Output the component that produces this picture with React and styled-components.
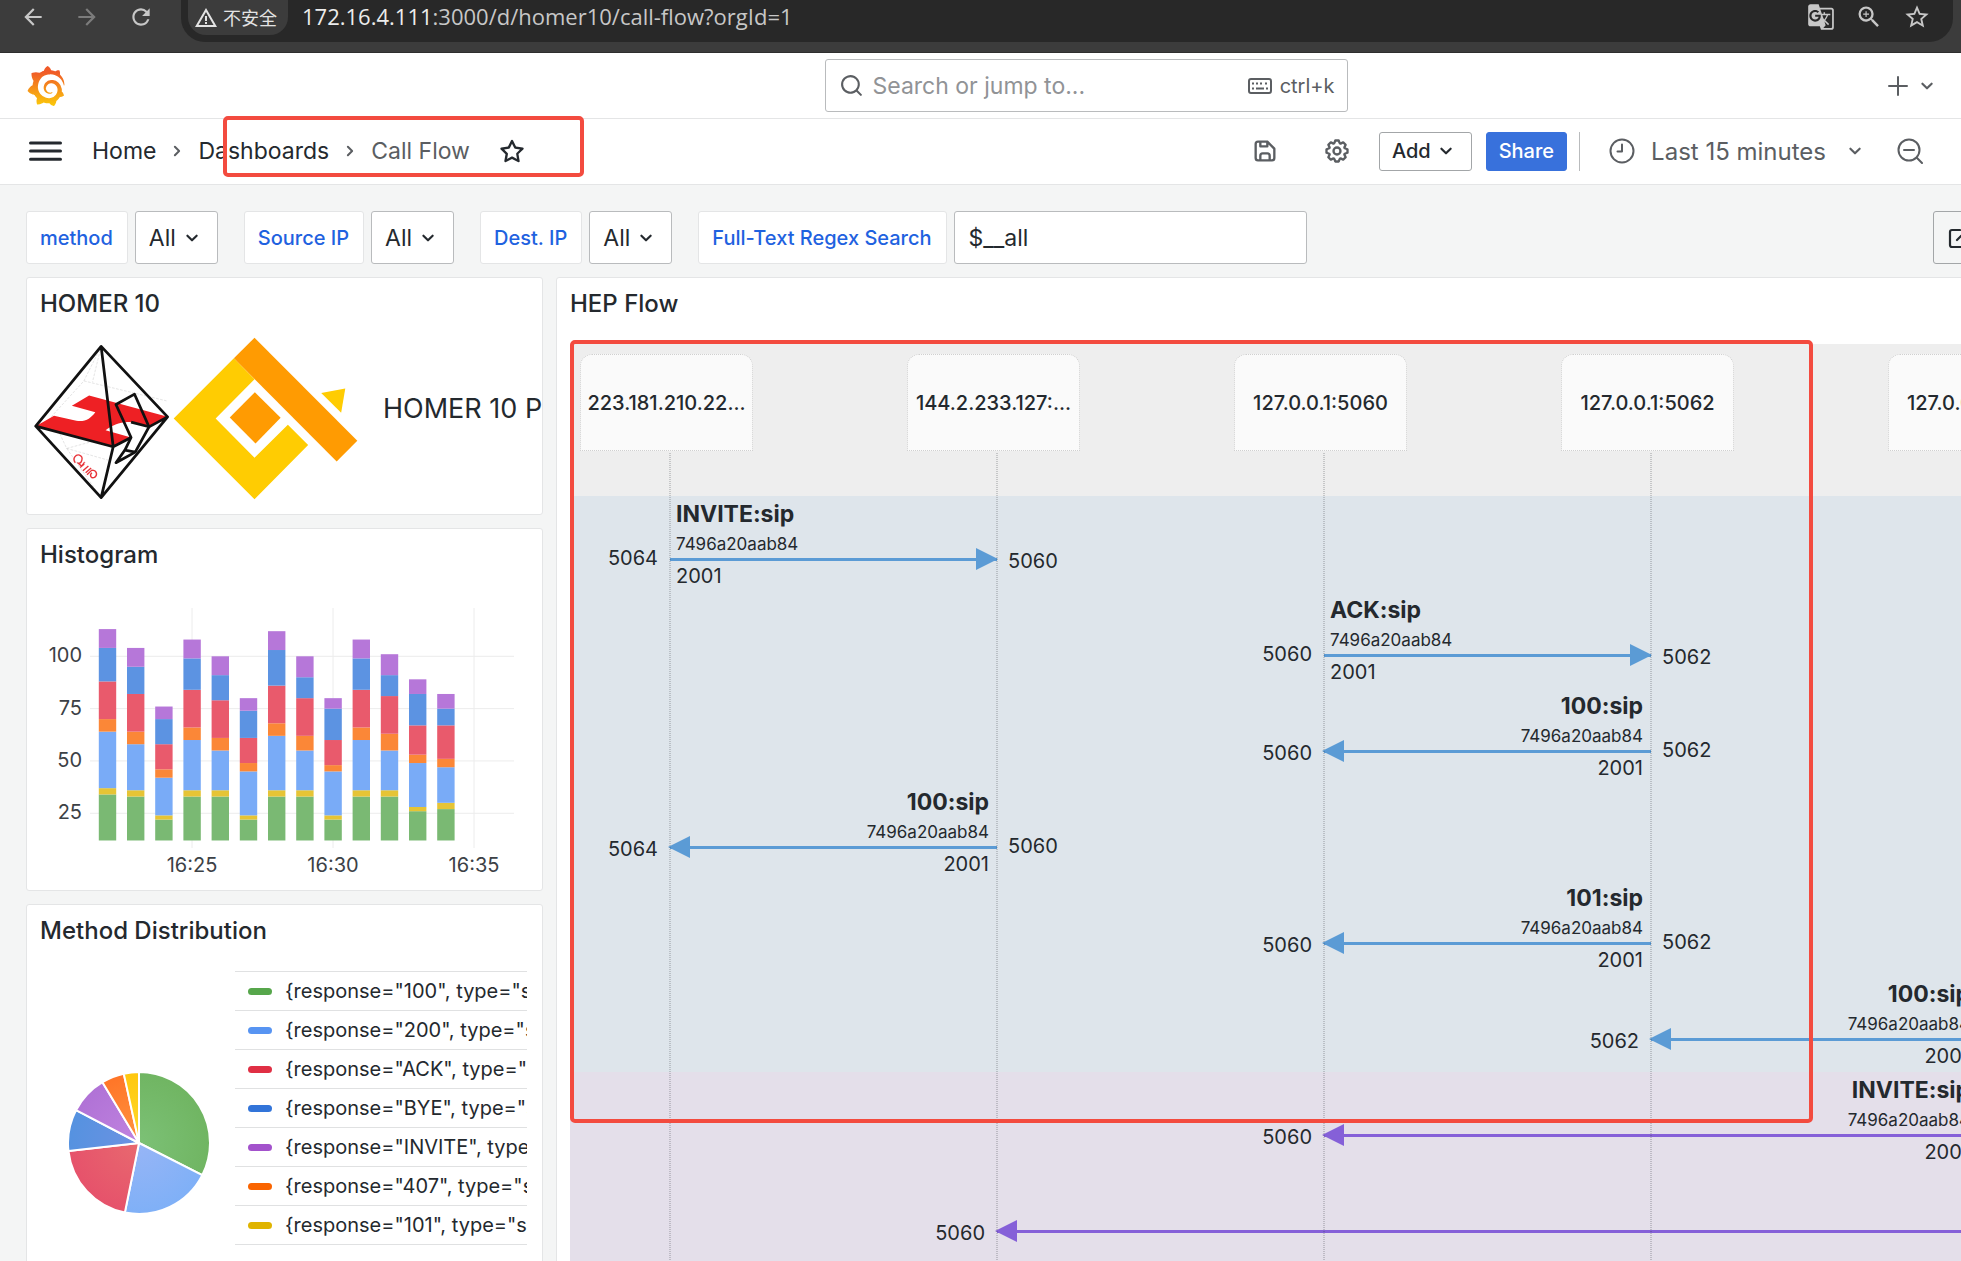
import React from 'react';
import styled, { createGlobalStyle } from 'styled-components';
import { SiGrafana } from 'react-icons/si';
import {
  MdArrowBack,
  MdArrowForward,
  MdGTranslate,
  MdRefresh,
  MdStarBorder,
  MdWarningAmber,
  MdZoomIn,
} from 'react-icons/md';

const GlobalStyle = createGlobalStyle`
  * {
    box-sizing: border-box;
  }
  body {
    margin: 0;
    overflow: hidden;
    background: #f4f5f5;
    color: #24292e;
    font-family: Inter, 'Liberation Sans', sans-serif;
    font-size: 20px;
  }
  button,
  input,
  select {
    font-family: inherit;
    color: inherit;
    margin: 0;
  }
`;

/* ---------- browser bar ---------- */

const Page = styled.div`
  height: 100vh;
  overflow: hidden;
`;

const BrowserBar = styled.div`
  display: flex;
  align-items: flex-start;
  height: 53px;
  padding: 0 8px 0 20px;
  background: #3c3c3c;
  border-bottom: 1px solid #2e2e2e;
  color: #c7c7c7;
`;

const NavButtons = styled.div`
  display: flex;
  gap: 28px;
  width: 161px;
  padding-top: 4px;
`;

const BarButton = styled.button`
  display: flex;
  padding: 0;
  border: 0;
  background: none;
  color: ${props => (props.$dim ? '#7c7c7c' : '#c7c7c7')};
`;

const Omnibox = styled.div`
  flex: 1;
  display: flex;
  align-items: flex-start;
  height: 42px;
  padding: 0 22px 0 7px;
  border-radius: 0 0 24px 24px;
  background: #282828;
`;

const SecurityChip = styled.div`
  display: flex;
  align-items: center;
  gap: 5px;
  height: 35px;
  padding: 0 11px 0 6px;
  border-radius: 0 0 18px 18px;
  background: #3c3c3c;
  color: #e3e3e3;
  font-family: 'Noto Sans CJK SC', sans-serif;
  font-size: 18px;
  line-height: 35px;
`;

const Url = styled.div`
  flex: 1;
  padding-left: 14px;
  font-family: 'Open Sans', 'Noto Sans', sans-serif;
  font-size: 22px;
  line-height: 32px;

  b {
    color: #ececec;
    font-weight: 400;
  }
`;

const OmniboxActions = styled.div`
  display: flex;
  gap: 20px;
  padding-top: 3px;
`;

/* ---------- app header ---------- */

/* the dashboard is wider than the window and runs off its right edge */
const Shell = styled.div`
  width: calc(100% + 211px);
`;

const Header = styled.header`
  display: grid;
  grid-template-columns: 1fr 523px 1fr;
  align-items: center;
  height: 66px;
  padding: 0 26px;
  background: #fff;
  border-bottom: 1px solid #e4e5e6;
`;

const LogoLink = styled.a`
  display: flex;
  color: #f05a28;
`;

const SearchBox = styled.label`
  display: flex;
  align-items: center;
  gap: 9px;
  height: 53px;
  padding: 0 12px 0 13px;
  border: 1px solid #b9bbbd;
  border-radius: 3px;
  color: #5b5e62;

  input {
    flex: 1;
    min-width: 0;
    padding: 0;
    border: 0;
    outline: 0;
    background: none;
    font-size: 23px;
  }
  input::placeholder {
    color: #919396;
    opacity: 1;
  }
`;

const Shortcut = styled.span`
  display: flex;
  align-items: center;
  gap: 8px;
  font-size: 20px;
`;

const HeaderActions = styled.div`
  display: flex;
  justify-content: flex-end;
  padding-right: 206px;
`;

const IconButton = styled.button`
  display: flex;
  align-items: center;
  gap: ${props => props.$gap || 0}px;
  padding: 0;
  border: 0;
  background: none;
  color: ${props => (props.$dark ? '#24292e' : '#5b5e62')};
  font-size: 24px;
`;

const Toolbar = styled.div`
  position: relative;
  display: flex;
  align-items: center;
  height: 66px;
  padding: 0 249px 1px 29px;
  background: #fff;
  border-bottom: 1px solid #e4e5e6;
`;

const Breadcrumbs = styled.nav`
  flex: 1;
  display: flex;
  align-items: center;
  gap: 9px;
  margin-left: 30px;
  color: #5b5e62;
  font-size: 23px;

  a {
    color: #24292e;
    text-decoration: none;
  }
  button {
    margin-left: 19px;
  }
`;

const ToolbarActions = styled.div`
  display: flex;
  align-items: center;
`;

const IconPair = styled.div`
  display: flex;
  gap: 44px;
  margin-right: 28px;
`;

const ToolbarButton = styled.button`
  display: flex;
  align-items: center;
  gap: 2px;
  height: 39px;
  padding: 0 12px;
  border: 1px solid ${props => (props.$primary ? '#3871dc' : '#a3a6a8')};
  border-radius: 3px;
  background: ${props => (props.$primary ? '#3871dc' : '#fff')};
  color: ${props => (props.$primary ? '#fff' : '#24292e')};
  font-size: 20px;
  font-weight: 500;
  margin-right: ${props => (props.$primary ? 12 : 14)}px;
`;

const Divider = styled.span`
  width: 1px;
  height: 39px;
  margin-right: 29px;
  background: #b9bbbd;
`;

const TimeGroup = styled.div`
  display: flex;
  gap: 29px;
`;

/* ---------- variables ---------- */

const Main = styled.main`
  padding: 26px 26px 0;
`;

const Variables = styled.form`
  display: flex;
  gap: 26px;
  margin-bottom: 13px;
`;

const Variable = styled.div`
  display: flex;
  gap: 7px;
`;

const VariableLabel = styled.label`
  display: flex;
  align-items: center;
  height: 53px;
  padding: 0 14px 0 13px;
  border: 1px solid #e4e5e6;
  border-radius: 3px;
  background: #fff;
  color: #1f62e0;
  font-size: 20px;
  font-weight: 500;
  white-space: nowrap;
`;

const SelectWrap = styled.span`
  display: grid;
  grid-template-columns: 1fr;
  align-items: center;
  width: 83px;
  height: 53px;
  border: 1px solid #b9bbbd;
  border-radius: 3px;
  background: #fff;

  select,
  svg {
    grid-area: 1 / 1;
  }
  select {
    appearance: none;
    width: 100%;
    height: 100%;
    padding: 0 13px;
    border: 0;
    background: none;
    font-size: 23px;
  }
  svg {
    justify-self: end;
    margin-right: 12px;
    pointer-events: none;
  }
`;

const VariableInput = styled.input`
  width: 353px;
  height: 53px;
  padding: 0 14px;
  border: 1px solid #b9bbbd;
  border-radius: 3px;
  background: #fff;
  font-size: 23px;
`;

const LinkButton = styled.button`
  width: 213px;
  height: 53px;
  margin-left: auto;
  padding: 0 14px;
  display: flex;
  align-items: center;
  border: 1px solid #a3a6a8;
  border-radius: 3px;
  background: none;
`;

/* ---------- panels ---------- */

const Dashboard = styled.div`
  display: grid;
  grid-template-columns: 517px minmax(0, 1fr);
  gap: 13px;
`;

const Column = styled.div`
  display: flex;
  flex-direction: column;
  gap: 13px;
`;

const Panel = styled.section`
  position: relative;
  border: 1px solid #e4e5e6;
  border-radius: 3px;
  background: #fff;
`;

const PanelTitle = styled.h2`
  margin: 0;
  padding: 0 13px;
  font-size: 24px;
  font-weight: 500;
  line-height: 52px;
`;

const HomerBody = styled.div`
  display: flex;
  align-items: center;
  gap: 3px;
  padding: 7px 0 14px 7px;
  overflow: hidden;

  svg {
    flex: none;
  }
`;

const HomerText = styled.p`
  margin: 0;
  padding: 0 0 20px 22px;
  font-size: 27px;
  white-space: nowrap;
`;

const ChartSvg = styled.svg`
  display: block;

  text {
    fill: #3c4146;
    font-size: 20px;
  }
`;

const PieBody = styled.div`
  display: grid;
  grid-template-columns: 208px minmax(0, 1fr);
  height: 372px;
  padding: 14px 15px 14px 0;

  > svg {
    align-self: center;
    justify-self: center;
    margin-left: 16px;
  }
`;

const Legend = styled.ul`
  margin: 0;
  padding: 0;
  list-style: none;
  border-top: 1px solid #e0e1e2;
`;

const LegendItem = styled.li`
  display: flex;
  align-items: center;
  gap: 13px;
  height: 39px;
  padding-left: 13px;
  border-bottom: 1px solid #e0e1e2;
  font-size: 20px;
  white-space: nowrap;
  overflow: hidden;

  &:before {
    content: '';
    flex: none;
    width: 24px;
    height: 7px;
    border-radius: 4px;
    background: ${props => props.$color};
  }
`;

/* ---------- call flow ---------- */

const Flow = styled.div`
  position: relative;
  margin: 14px 13px 0;
  overflow: hidden;
`;

const Hosts = styled.div`
  display: flex;
  gap: 154px;
  height: 152px;
  padding: 10px 0 0 10px;
  background: #eee;
`;

const Host = styled.div`
  flex: none;
  width: 173px;
  height: 97px;
  padding: 0 6px;
  border: 1px dotted #d0d0d0;
  border-radius: 12px 12px 0 0;
  background: #fafafa;
  font-size: 20px;
  font-weight: 500;
  line-height: 97px;
  text-align: center;
  white-space: nowrap;
`;

/* life lines lie over the rows, one under each host */
const LifeLines = styled.div`
  position: absolute;
  inset: 109px 0 0 99px;
  display: flex;

  span {
    flex: none;
    width: 327px;
    background: linear-gradient(rgba(36, 41, 46, 0.2) 50%, transparent 50%) 0 0 / 2px 2px repeat-y;
  }
`;

const Row = styled.div`
  display: grid;
  grid-template-columns: 100px repeat(6, 327px);
  height: 96px;
  background: ${props => (props.$color === '#8560d8' ? '#e4dfea' : '#dee5eb')};
`;

const Port = styled.span`
  grid-row: 1;
  grid-column: ${props => props.$col};
  padding: ${props => (props.$source ? 50 : 53)}px 12px 0 11px;
  text-align: ${props => (props.$left ? 'right' : 'left')};
  font-size: 20px;
  line-height: 24px;
`;

const Message = styled.div`
  grid-row: 1;
  grid-column: ${props => props.$from} / ${props => props.$to};
  text-align: ${props => (props.$left ? 'right' : 'left')};

  > * {
    display: block;
    padding: 0 8px 0 6px;
  }
  strong {
    font-size: 23px;
    font-weight: 700;
    line-height: 36px;
  }
  small {
    font-size: 17px;
    line-height: 24px;
  }
  span {
    font-size: 20px;
    line-height: 30px;
  }
`;

const Arrow = styled.i`
  position: relative;
  height: 3px;
  margin-top: 2px;
  background: ${props => props.$color};

  &:after {
    content: '';
    position: absolute;
    top: -10px;
    ${props => (props.$left ? 'left: -2px' : 'right: -1px')};
    border: 11px solid transparent;
    border-${props => (props.$left ? 'right' : 'left')}: 22px solid ${props => props.$color};
    border-${props => (props.$left ? 'left' : 'right')}-width: 0;
  }
`;

const Highlight = styled.div`
  position: absolute;
  top: ${props => props.$top}px;
  left: ${props => props.$left}px;
  width: ${props => props.$width}px;
  height: ${props => props.$height}px;
  border: 4px solid #f34b3f;
  border-radius: 5px;
  pointer-events: none;
`;

/* ---------- icons ---------- */

const paths = {
  angleDown:
    'M17 9.17a1 1 0 0 0-1.41 0L12 12.71 8.46 9.17a1 1 0 0 0-1.41 0 1 1 0 0 0 0 1.42l4.24 4.24a1 1 0 0 0 1.42 0L17 10.59a1 1 0 0 0 0-1.42Z',
  angleRight:
    'M14.83 11.29 10.59 7.05a1 1 0 0 0-1.42 0 1 1 0 0 0 0 1.41L12.71 12l-3.54 3.54a1 1 0 0 0 0 1.41 1 1 0 0 0 .71.29 1 1 0 0 0 .71-.29l4.24-4.24a1 1 0 0 0 0-1.42Z',
  search:
    'M21.71 20.29 18 16.61A9 9 0 1 0 16.61 18l3.68 3.68a1 1 0 0 0 1.42 0 1 1 0 0 0 0-1.39ZM11 18a7 7 0 1 1 7-7 7 7 0 0 1-7 7Z',
  save:
    'm20.71 9.29-6-6a1 1 0 0 0-.32-.21A1.09 1.09 0 0 0 14 3H6a3 3 0 0 0-3 3v12a3 3 0 0 0 3 3h12a3 3 0 0 0 3-3v-8a1 1 0 0 0-.29-.71ZM9 5h4v2H9Zm6 14H9v-3a1 1 0 0 1 1-1h4a1 1 0 0 1 1 1Zm4-1a1 1 0 0 1-1 1h-1v-3a3 3 0 0 0-3-3h-4a3 3 0 0 0-3 3v3H6a1 1 0 0 1-1-1V6a1 1 0 0 1 1-1h1v3a1 1 0 0 0 1 1h6a1 1 0 0 0 1-1V6.41l4 4Z',
  cog:
    'M21.32,9.55l-1.89-.63.89-1.78A1,1,0,0,0,20.13,6L18,3.87a1,1,0,0,0-1.15-.19l-1.78.89-.63-1.89A1,1,0,0,0,13.5,2h-3a1,1,0,0,0-.95.68L8.92,4.57,7.14,3.68A1,1,0,0,0,6,3.87L3.87,6a1,1,0,0,0-.19,1.15l.89,1.78-1.89.63A1,1,0,0,0,2,10.5v3a1,1,0,0,0,.68.95l1.89.63-.89,1.78A1,1,0,0,0,3.87,18L6,20.13a1,1,0,0,0,1.15.19l1.78-.89.63,1.89a1,1,0,0,0,.95.68h3a1,1,0,0,0,.95-.68l.63-1.89,1.78.89A1,1,0,0,0,18,20.13L20.13,18a1,1,0,0,0,.19-1.15l-.89-1.78,1.89-.63A1,1,0,0,0,22,13.5v-3A1,1,0,0,0,21.32,9.55ZM20,12.78l-1.2.4A2,2,0,0,0,17.64,16l.57,1.14-1.1,1.1L16,17.64a2,2,0,0,0-2.79,1.16l-.4,1.2H11.22l-.4-1.2A2,2,0,0,0,8,17.64l-1.14.57-1.1-1.1L6.36,16A2,2,0,0,0,5.2,13.18L4,12.78V11.22l1.2-.4A2,2,0,0,0,6.36,8L5.79,6.89l1.1-1.1L8,6.36A2,2,0,0,0,10.82,5.2l.4-1.2h1.56l.4,1.2A2,2,0,0,0,16,6.36l1.14-.57,1.1,1.1L17.64,8a2,2,0,0,0,1.16,2.79l1.2.4ZM12,8a4,4,0,1,0,4,4A4,4,0,0,0,12,8Zm0,6a2,2,0,1,1,2-2A2,2,0,0,1,12,14Z',
  star:
    'M22 9.67a1 1 0 0 0-.86-.67l-5.69-.83L12.9 3a1 1 0 0 0-1.8 0L8.55 8.16 2.86 9a1 1 0 0 0-.81.68 1 1 0 0 0 .25 1l4.13 4-1 5.68a1 1 0 0 0 1.45 1.07L12 18.76l5.1 2.68a.93.93 0 0 0 .46.1 1 1 0 0 0 .99-1.19l-1-5.68 4.13-4A1 1 0 0 0 22 9.67Zm-6.15 4a1 1 0 0 0-.29.88l.72 4.2-3.76-2a1.06 1.06 0 0 0-.94 0l-3.76 2 .72-4.2a1 1 0 0 0-.29-.88l-3-3 4.21-.61a1 1 0 0 0 .76-.55L12 5.7l1.88 3.82a1 1 0 0 0 .76.55l4.21.61Z',
};

const Icon = ({ name, size }) => (
  <svg width={size} height={size} viewBox="0 0 24 24" fill="currentColor" aria-hidden="true">
    <path d={paths[name]} />
  </svg>
);

const MenuIcon = () => (
  <svg width="33" height="22" viewBox="0 0 33 22" stroke="currentColor" strokeWidth="3" strokeLinecap="round">
    <path d="M1.5 3h30M1.5 11h30M1.5 19.3h30" />
  </svg>
);

const PlusIcon = () => (
  <svg width="20" height="20" viewBox="0 0 20 20" stroke="currentColor" strokeWidth="2" strokeLinecap="round">
    <path d="M10 1v18M1 10h18" />
  </svg>
);

const KeyboardIcon = () => (
  <svg width="24" height="16" viewBox="0 0 24 16" fill="none" stroke="currentColor" strokeWidth="2">
    <rect x="1" y="1" width="22" height="14" rx="2" />
    <path d="M4 5.5h2M8 5.5h2M12 5.5h2M17 5.5h2M4 10.5h2M8 10.5h8M18 10.5h2" />
  </svg>
);

const ClockIcon = () => (
  <svg width="26" height="26" viewBox="0 0 26 26" fill="none" stroke="currentColor" strokeWidth="2">
    <circle cx="13" cy="13" r="11.5" />
    <path d="M13 6.5V13.5H8.5" strokeLinecap="round" strokeLinejoin="round" />
  </svg>
);

const ZoomOutIcon = () => (
  <svg width="26" height="26" viewBox="0 0 26 26" fill="none" stroke="currentColor" strokeWidth="2" strokeLinecap="round">
    <circle cx="12" cy="12" r="10.5" />
    <path d="M7 12h10M19.8 19.8 25 25" />
  </svg>
);

const ExternalIcon = () => (
  <svg width="24" height="24" viewBox="0 0 24 24" fill="none" stroke="currentColor" strokeWidth="2.2" strokeLinecap="round">
    <path d="M12 4H4a2 2 0 0 0-2 2v13a2 2 0 0 0 2 2h13a2 2 0 0 0 2-2v-7M9 14 20 3M15 3h5v5" />
  </svg>
);

const GrafanaLogo = () => (
  <>
    <svg width="0" height="0" aria-hidden="true">
      <linearGradient id="grafana" x1="0" y1="0" x2="0" y2="1">
        <stop offset="0.15" stopColor="#f05a28" />
        <stop offset="1" stopColor="#fbca0a" />
      </linearGradient>
    </svg>
    <SiGrafana size={40} fill="url(#grafana)" />
  </>
);

const QxipLogo = () => (
  <svg width="136" height="163" viewBox="40 200 395 490" preserveAspectRatio="none" fill="none">
    <path
      d="M235 228 185 332 90 440M185 332 425 392M235 228 210 335M110 480 135 535 255 570M135 535 235 683M135 535 260 500"
      stroke="#c9c9c9"
      strokeWidth="1.5"
      strokeDasharray="8 4"
    />
    <path
      d="M45 468 98 437 163 452C190 456 205 444 218 426L150 407 200 376 428 440 374 470 322 456C290 453 268 466 248 480L322 502 270 530Z"
      fill="#ee2024"
    />
    <path
      d="M235 228 428 440 235 683 45 468ZM235 228 270 530 235 683M45 468 270 530 322 502M428 440 374 470 322 456"
      stroke="#111"
      strokeWidth="8"
      strokeLinejoin="round"
    />
    <path
      d="M278 403 332 372 374 470 334 546 304 540 322 502ZM304 540 278 578 334 546"
      stroke="#111"
      strokeWidth="8"
      strokeLinejoin="round"
    />
    <path
      d="M160 578C150 565 162 552 172 555 186 560 178 582 168 580M166 577 178 588C184 582 187 575 187 578M174 592 186 582M182 602 198 588M190 608 206 594M194 614 208 600C222 600 226 614 216 622 206 626 200 616 208 608"
      stroke="#e8343a"
      strokeWidth="4"
    />
  </svg>
);

const HomerLogo = () => (
  <svg width="185" height="163" viewBox="445 200 538 490" preserveAspectRatio="none">
    <path d="M622 264 682 327 569 445 682 563 779 464 838 525 682 688 447 445Z" fill="#ffcc02" />
    <path d="M682 202 981 512 921 574 622 264Z" fill="#ff9b02" />
    <path d="M683 366 758 443 685 520 610 442Z" fill="#ff9b02" />
    <path d="M876 368 946 355 934 428Z" fill="#ffcc02" />
  </svg>
);

/* ---------- histogram ---------- */

const stackColors = ['#7ab973', '#e6c435', '#79abf7', '#fb8737', '#e95a6c', '#5c93e2', '#b677d9'];

// cumulative tops of every stacked bar, one bar a minute
const bars = [
  [34, 37, 64, 70, 88, 104, 113],
  [33, 36, 58, 64, 82, 95, 104],
  [22, 24, 42, 46, 58, 70, 76],
  [33, 36, 60, 66, 84, 99, 108],
  [33, 36, 55, 61, 79, 91, 100],
  [22, 24, 45, 49, 61, 74, 80],
  [33, 36, 62, 68, 86, 103, 112],
  [33, 36, 55, 62, 80, 90, 100],
  [22, 24, 45, 48, 60, 75, 80],
  [33, 36, 60, 66, 84, 99, 108],
  [33, 36, 55, 63, 81, 91, 101],
  [26, 28, 49, 53, 67, 82, 89],
  [27, 30, 47, 51, 67, 75, 82],
];

const yOf = value => 284.6 - value * 2.093;

const Histogram = () => (
  <ChartSvg width="514" height="309" role="img" aria-label="Histogram">
    {[100, 75, 50, 25].map(tick => (
      <g key={tick}>
        <path d={`M63 ${yOf(tick)}H487`} stroke="#ececec" />
        <text x="55" y={yOf(tick) + 6} textAnchor="end">
          {tick}
        </text>
      </g>
    ))}
    {['16:25', '16:30', '16:35'].map((label, i) => (
      <g key={label}>
        <path d={`M${165 + i * 141} 27V267`} stroke="#ececec" />
        <text x={165 + i * 141} y="291" textAnchor="middle">
          {label}
        </text>
      </g>
    ))}
    {bars.map((tops, i) =>
      tops.map((top, j) => {
        const base = j === 0 ? 12 : tops[j - 1];
        return (
          <rect
            key={`${i}-${j}`}
            x={71.8 + i * 28.2}
            y={yOf(top)}
            width="17.4"
            height={(top - base) * 2.093}
            fill={stackColors[j]}
          />
        );
      })
    )}
  </ChartSvg>
);

/* ---------- pie ---------- */

const slices = [
  { end: 117, from: '#7cc176', to: '#70b562' },
  { end: 191.5, from: '#97b5f6', to: '#7fb0f7' },
  { end: 263.5, from: '#e8696f', to: '#e6526b' },
  { end: 297.5, from: '#6c92e2', to: '#5592e0' },
  { end: 329, from: '#c083df', to: '#b072d6' },
  { end: 347.6, from: '#ff9440', to: '#ff7527' },
  { end: 360, from: '#ffdb2c', to: '#ffc70e' },
];

const pointAt = (angle, radius) => {
  const rad = (angle * Math.PI) / 180;
  return `${72 + radius * Math.sin(rad)} ${73 + radius * Math.cos(rad) * -1}`;
};

const Pie = () => (
  <svg width="144" height="146" role="img" aria-label="Method distribution">
    {slices.map((slice, i) => {
      const start = i === 0 ? 0 : slices[i - 1].end;
      const large = slice.end - start > 180 ? 1 : 0;
      return (
        <g key={slice.end}>
          <radialGradient id={`slice${i}`} gradientUnits="userSpaceOnUse" cx="72" cy="73" r="71">
            <stop offset="0" stopColor={slice.from} />
            <stop offset="1" stopColor={slice.to} />
          </radialGradient>
          <path
            d={`M72 73L${pointAt(start, 71)}A71 71 0 ${large} 1 ${pointAt(slice.end, 71)}Z`}
            fill={`url(#slice${i})`}
            stroke="#fff"
            strokeWidth="2"
            strokeLinejoin="round"
          />
        </g>
      );
    })}
  </svg>
);

const legend = [
  ['100', '#56a64b'],
  ['200', '#5794f2'],
  ['ACK', '#e02f44'],
  ['BYE', '#3274d9'],
  ['INVITE', '#a352cc'],
  ['407', '#fa6400'],
  ['101', '#e0b400'],
];

/* ---------- flow data ---------- */

const hosts = ['223.181.210.22...', '144.2.233.127:...', '127.0.0.1:5060', '127.0.0.1:5062', '127.0.0.1:5064'];

const BLUE = '#5b9bd5';
const PURPLE = '#8560d8';

// from and to are host indexes
const messages = [
  { title: 'INVITE:sip', from: 0, to: 1, ports: ['5064', '5060'], color: BLUE },
  { title: 'ACK:sip', from: 2, to: 3, ports: ['5060', '5062'], color: BLUE },
  { title: '100:sip', from: 3, to: 2, ports: ['5062', '5060'], color: BLUE },
  { title: '100:sip', from: 1, to: 0, ports: ['5060', '5064'], color: BLUE },
  { title: '101:sip', from: 3, to: 2, ports: ['5062', '5060'], color: BLUE },
  { title: '100:sip', from: 4, to: 3, ports: ['5060', '5062'], color: BLUE },
  { title: 'INVITE:sip', from: 4, to: 2, ports: ['5060', '5060'], color: PURPLE },
  { title: 'INVITE:sip', from: 5, to: 1, ports: ['5060', '5060'], color: PURPLE },
];

const FlowRow = ({ message }) => {
  const { title, from, to, ports, color } = message;
  const left = to < from;
  const first = Math.min(from, to);
  const last = Math.max(from, to);
  return (
    <Row $color={color}>
      <Port $col={first + 1} $left $source={!left}>
        {left ? ports[1] : ports[0]}
      </Port>
      <Message $from={first + 2} $to={last + 2} $left={left}>
        <strong>{title}</strong>
        <small>7496a20aab84</small>
        <Arrow $left={left} $color={color} />
        <span>2001</span>
      </Message>
      <Port $col={last + 2} $source={left}>
        {left ? ports[0] : ports[1]}
      </Port>
    </Row>
  );
};

const VariableSelect = ({ id, label }) => (
  <Variable>
    <VariableLabel htmlFor={id}>{label}</VariableLabel>
    <SelectWrap>
      <select id={id} defaultValue="All">
        <option>All</option>
      </select>
      <Icon name="angleDown" size={26} />
    </SelectWrap>
  </Variable>
);

const App = () => {
  return (
    <Page>
      <GlobalStyle />
      <BrowserBar>
        <NavButtons>
          <BarButton aria-label="Back">
            <MdArrowBack size={26} />
          </BarButton>
          <BarButton aria-label="Forward" $dim>
            <MdArrowForward size={26} />
          </BarButton>
          <BarButton aria-label="Reload">
            <MdRefresh size={26} />
          </BarButton>
        </NavButtons>
        <Omnibox>
          <SecurityChip>
            <MdWarningAmber size={24} />
            不安全
          </SecurityChip>
          <Url>
            <b>172.16.4.111</b>:3000/d/homer10/call-flow?orgId=1
          </Url>
          <OmniboxActions>
            <BarButton aria-label="Translate">
              <MdGTranslate size={28} />
            </BarButton>
            <BarButton aria-label="Zoom">
              <MdZoomIn size={28} />
            </BarButton>
            <BarButton aria-label="Bookmark">
              <MdStarBorder size={28} />
            </BarButton>
          </OmniboxActions>
        </Omnibox>
      </BrowserBar>

      <Shell>
        <Header>
          <LogoLink href="#" aria-label="Grafana">
            <GrafanaLogo />
          </LogoLink>
          <SearchBox>
            <Icon name="search" size={25} />
            <input type="text" placeholder="Search or jump to..." aria-label="Search" />
            <Shortcut>
              <KeyboardIcon />
              ctrl+k
            </Shortcut>
          </SearchBox>
          <HeaderActions>
            <IconButton $gap={6} aria-label="New">
              <PlusIcon />
              <Icon name="angleDown" size={26} />
            </IconButton>
          </HeaderActions>
        </Header>

        <Toolbar>
          <IconButton $dark aria-label="Menu">
            <MenuIcon />
          </IconButton>
          <Breadcrumbs>
            <a href="#">Home</a>
            <Icon name="angleRight" size={24} />
            <a href="#">Dashboards</a>
            <Icon name="angleRight" size={24} />
            <span>Call Flow</span>
            <IconButton $dark aria-label="Mark as favorite">
              <Icon name="star" size={28} />
            </IconButton>
          </Breadcrumbs>
          <ToolbarActions>
            <IconPair>
              <IconButton aria-label="Save dashboard">
                <Icon name="save" size={28} />
              </IconButton>
              <IconButton aria-label="Settings">
                <Icon name="cog" size={28} />
              </IconButton>
            </IconPair>
            <ToolbarButton>
              Add
              <Icon name="angleDown" size={26} />
            </ToolbarButton>
            <ToolbarButton $primary>Share</ToolbarButton>
            <Divider />
            <TimeGroup>
              <IconButton $gap={16}>
                <ClockIcon />
                Last 15 minutes
                <Icon name="angleDown" size={26} />
              </IconButton>
              <IconButton aria-label="Zoom out">
                <ZoomOutIcon />
              </IconButton>
            </TimeGroup>
          </ToolbarActions>
          <Highlight $top={-3} $left={223} $width={361} $height={61} />
        </Toolbar>

        <Main>
          <Variables>
            <VariableSelect id="method" label="method" />
            <VariableSelect id="source" label="Source IP" />
            <VariableSelect id="dest" label="Dest. IP" />
            <Variable>
              <VariableLabel htmlFor="regex">Full-Text Regex Search</VariableLabel>
              <VariableInput id="regex" type="text" defaultValue="$__all" />
            </Variable>
            <LinkButton type="button" aria-label="Open link">
              <ExternalIcon />
            </LinkButton>
          </Variables>

          <Dashboard>
            <Column>
              <Panel>
                <PanelTitle>HOMER 10</PanelTitle>
                <HomerBody>
                  <QxipLogo />
                  <HomerLogo />
                  <HomerText>HOMER 10 P</HomerText>
                </HomerBody>
              </Panel>
              <Panel>
                <PanelTitle>Histogram</PanelTitle>
                <Histogram />
              </Panel>
              <Panel>
                <PanelTitle>Method Distribution</PanelTitle>
                <PieBody>
                  <Pie />
                  <Legend>
                    {legend.map(([response, color]) => (
                      <LegendItem key={response} $color={color}>
                        {`{response="${response}", type="sip"}`}
                      </LegendItem>
                    ))}
                  </Legend>
                </PieBody>
              </Panel>
            </Column>

            <Panel>
              <PanelTitle>HEP Flow</PanelTitle>
              <Flow>
                <Hosts>
                  {hosts.map(host => (
                    <Host key={host}>{host}</Host>
                  ))}
                </Hosts>
                {messages.map((message, i) => (
                  <FlowRow key={i} message={message} />
                ))}
                <LifeLines>
                  {hosts.map(host => (
                    <span key={host} />
                  ))}
                </LifeLines>
              </Flow>
              <Highlight $top={62} $left={13} $width={1243} $height={783} />
            </Panel>
          </Dashboard>
        </Main>
      </Shell>
    </Page>
  );
};

export default App;
